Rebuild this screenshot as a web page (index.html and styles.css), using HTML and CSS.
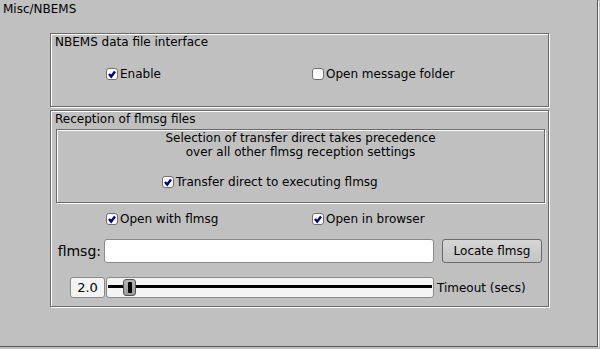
FILE: index.html
```html
<!DOCTYPE html>
<html lang="en">
<head>
    <meta charset="UTF-8">
    <title>Misc/NBEMS</title>
    <link rel="stylesheet" href="styles.css">
</head>
<body>

    <div class="panel">
        <div class="panel-title">Misc/NBEMS</div>

        <!-- Interface NBEMS -->
        <div class="group group-nbems">
            <div class="group-label">NBEMS data file interface</div>
            <div class="check-row">
                <label class="check">
                    <span class="box"><svg viewBox="0 0 10 10" width="10" height="10"><path d="M2 5 L4.2 7.6 L8 2.6" fill="none" stroke="#000080" stroke-width="2.4"/></svg></span>Enable
                </label>
                <label class="check">
                    <span class="box"></span>Open message folder
                </label>
            </div>
        </div>

        <!-- Recepcao de arquivos flmsg -->
        <div class="group group-recv">
            <div class="group-label">Reception of flmsg files</div>
            <div class="note">
                <p>Selection of transfer direct takes precedence<br>over all other flmsg reception settings</p>
                <label class="check">
                    <span class="box"><svg viewBox="0 0 10 10" width="10" height="10"><path d="M2 5 L4.2 7.6 L8 2.6" fill="none" stroke="#000080" stroke-width="2.4"/></svg></span>Transfer direct to executing flmsg
                </label>
            </div>
            <div class="check-row">
                <label class="check">
                    <span class="box"><svg viewBox="0 0 10 10" width="10" height="10"><path d="M2 5 L4.2 7.6 L8 2.6" fill="none" stroke="#000080" stroke-width="2.4"/></svg></span>Open with flmsg
                </label>
                <label class="check">
                    <span class="box"><svg viewBox="0 0 10 10" width="10" height="10"><path d="M2 5 L4.2 7.6 L8 2.6" fill="none" stroke="#000080" stroke-width="2.4"/></svg></span>Open in browser
                </label>
            </div>
            <div class="path-row">
                <span class="path-label">flmsg:</span>
                <div class="path-input"></div>
                <button class="btn">Locate flmsg</button>
            </div>
            <div class="timeout-row">
                <div class="value">2.0</div>
                <div class="slider">
                    <div class="track"></div>
                    <div class="thumb"><span></span></div>
                </div>
                <span class="timeout-label">Timeout (secs)</span>
            </div>
        </div>
    </div>

</body>
</html>
```

FILE: styles.css
```css
body {
    margin: 0;
    background: #c0c0c0;
    font-family: "DejaVu Sans", sans-serif;
    font-size: 12px;
    line-height: 14px;
    color: #000;
}

/* Painel principal */
.panel {
    width: 598px;
    height: 347px;
    box-sizing: border-box;
    border-right: 1px solid #5a5a5a;
    border-bottom: 1px solid #5a5a5a;
    box-shadow: 1px 1px 0 #fff;
}

.panel-title {
    padding: 2px 0 0 3px;
    height: 14px;
}

/* Moldura gravada (engraved) */
.group,
.note {
    box-sizing: border-box;
    border: 1px solid #6a6a6a;
    box-shadow: inset 1px 1px 0 #fff, 1px 1px 0 #fff;
}

.group {
    margin-left: 50px;
    width: 499px;
}

.group-nbems {
    margin-top: 17px;
    height: 74px;
}

.group-recv {
    margin-top: 3px;
    height: 197px;
}

.group-label {
    padding: 1px 0 0 4px;
}

/* Caixas de selecao */
.check-row {
    display: flex;
    padding-left: 55px;
}

.group-nbems .check-row {
    margin-top: 18px;
}

.group-recv .check-row {
    margin-top: 9px;
}

.check-row .check:first-child {
    width: 206px;
}

.check {
    display: flex;
    align-items: center;
    gap: 2px;
}

.box {
    width: 12px;
    height: 12px;
    box-sizing: border-box;
    border: 1px solid #707070;
    border-radius: 3px;
    background: #fff;
    display: flex;
    align-items: center;
    justify-content: center;
}

/* Aviso sobre transferencia direta */
.note {
    margin: 3px 0 0 5px;
    width: 489px;
    height: 74px;
    padding-top: 1px;
    text-align: center;
}

.note p {
    margin: 0;
}

.note .check {
    margin: 16px 0 0 105px;
}

/* Caminho do flmsg */
.path-row {
    display: flex;
    align-items: center;
    margin-top: 13px;
}

.path-label {
    width: 50px;
    text-align: right;
    font-size: 14px;
    line-height: 16px;
}

.path-input {
    margin-left: 3px;
    width: 330px;
    height: 24px;
    box-sizing: border-box;
    border: 1px solid #8a8a8a;
    border-radius: 3px;
    background: #fff;
}

.btn {
    margin-left: 8px;
    width: 100px;
    height: 24px;
    padding: 0;
    font-family: inherit;
    font-size: 12px;
    color: #000;
    border: 1px solid #6a6a6a;
    border-radius: 3px;
    background: linear-gradient(#d6d6d6, #c4c4c4);
}

/* Tempo limite */
.timeout-row {
    display: flex;
    align-items: center;
    margin-top: 14px;
    padding-left: 19px;
}

.value,
.slider {
    height: 21px;
    box-sizing: border-box;
    border: 1px solid #8a8a8a;
    border-radius: 3px;
    background: #f4f4f4;
}

.value {
    width: 35px;
    text-align: center;
    font-size: 13px;
    line-height: 19px;
}

.slider {
    margin-left: 1px;
    width: 328px;
    position: relative;
}

.track {
    position: absolute;
    left: 1px;
    right: 1px;
    top: 7px;
    height: 3px;
    background: #000;
}

.thumb {
    position: absolute;
    left: 16px;
    top: 1px;
    width: 13px;
    height: 17px;
    box-sizing: border-box;
    border: 1px solid #555;
    border-radius: 3px;
    background: linear-gradient(#b4b4b4, #9a9a9a);
    display: flex;
    align-items: center;
    justify-content: center;
}

.thumb span {
    width: 4px;
    height: 11px;
    background: #000;
    border-radius: 1px;
}

.timeout-label {
    margin-left: 3px;
}
```
